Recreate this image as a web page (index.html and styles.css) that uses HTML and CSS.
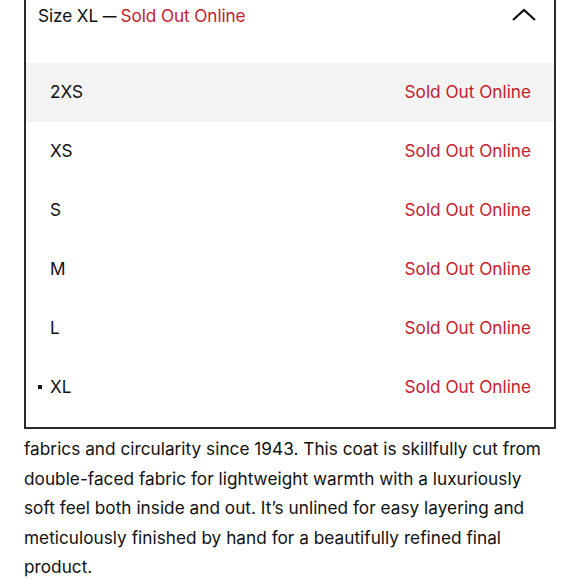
FILE: index.html
```html
<!DOCTYPE html>
<html>
<head>
<meta charset="utf-8">
<link rel="stylesheet" href="styles.css">
</head>
<body>
<div class="page">
  <div class="select">
    <div class="select-head">
      <span class="head-label">Size XL <span class="dash">—</span> <span class="red">Sold Out Online</span></span>
      <svg class="chev" width="26" height="16" viewBox="0 0 26 16"><path d="M2 13 L13 3 L24 13" fill="none" stroke="#111" stroke-width="2.2"/></svg>
    </div>
    <ul class="options">
      <li class="opt hover"><span>2XS</span><span class="red">Sold Out Online</span></li>
      <li class="opt"><span>XS</span><span class="red">Sold Out Online</span></li>
      <li class="opt"><span>S</span><span class="red">Sold Out Online</span></li>
      <li class="opt"><span>M</span><span class="red">Sold Out Online</span></li>
      <li class="opt"><span>L</span><span class="red">Sold Out Online</span></li>
      <li class="opt selected"><span class="size">XL</span><span class="red">Sold Out Online</span></li>
    </ul>
  </div>
  <p class="desc">fabrics and circularity since 1943. This coat is skillfully cut from double-faced fabric for lightweight warmth with a luxuriously soft feel both inside and out. It’s unlined for easy layering and meticulously finished by hand for a beautifully refined final product.</p>
</div>
</body>
</html>
```
FILE: styles.css
```css
html, body { margin: 0; padding: 0; background: #fff; }
body { font-family: "Inter", "Lato", sans-serif; color: #111; font-size: 17.2px; }
.page { padding: 0 24px; width: 532px; }
.select { border: 2px solid #2a2a2a; margin-top: -2px; }
.select-head { height: 63px; display: flex; justify-content: space-between; align-items: flex-start; padding: 5px 17px 0 12px; box-sizing: border-box; }
.head-label { line-height: 22px; letter-spacing: -0.1px; }
.dash { display: inline-block; transform: scaleX(0.8); margin: 0 -2px; }
.chev { margin-top: 2px; }
.red { color: #c4202e; }
.options { list-style: none; margin: 0; padding: 0 0 10px; }
.opt { height: 59px; display: flex; align-items: center; justify-content: space-between; padding: 0 23px 3px 24px; box-sizing: border-box; }
.opt.hover { background: #f3f3f3; }
.selected .size::before { content: ""; display: inline-block; width: 4px; height: 4px; background: #111; margin-left: -12px; margin-right: 8px; vertical-align: middle; position: relative; top: -1px; }
.desc { margin: 5px 0 0; line-height: 29.5px; width: 526px; letter-spacing: 0.03px; }
```
